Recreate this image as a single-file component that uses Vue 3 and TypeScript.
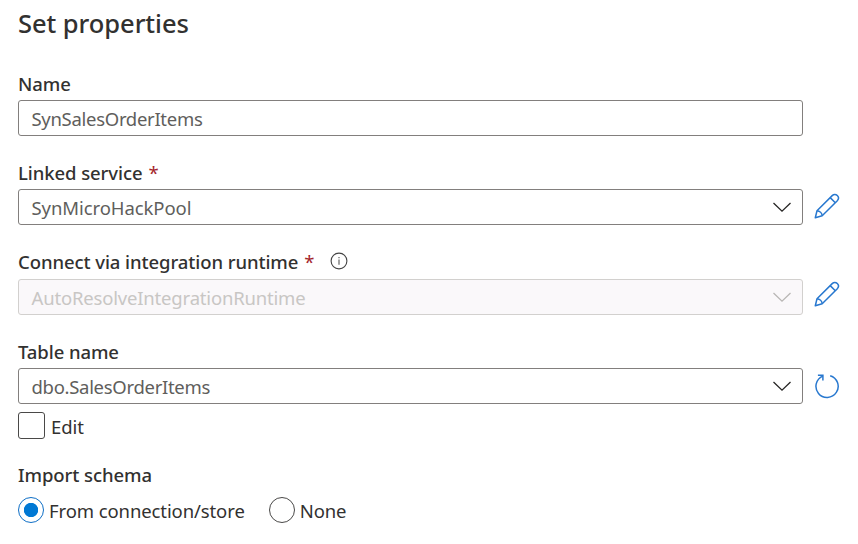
<script setup lang="ts">
import { ref } from 'vue'

interface Field {
  id: string
  label: string
  value: string
  required?: boolean
  info?: boolean
  select?: boolean
  disabled?: boolean
  action?: 'edit' | 'refresh'
}

const fields: Field[] = [
  { id: 'name', label: 'Name', value: 'SynSalesOrderItems' },
  { id: 'linked', label: 'Linked service', value: 'SynMicroHackPool', required: true, select: true, action: 'edit' },
  { id: 'runtime', label: 'Connect via integration runtime', value: 'AutoResolveIntegrationRuntime', required: true, info: true, select: true, disabled: true, action: 'edit' },
  { id: 'table', label: 'Table name', value: 'dbo.SalesOrderItems', select: true, action: 'refresh' },
]
const options = [
  { id: 'connection', label: 'From connection/store' },
  { id: 'none', label: 'None' },
]
const schema = ref('connection')
const editing = ref(false)
</script>

<template>
  <main class="panel">
    <h1 class="title"><span>Set properties</span></h1>

    <section v-for="f in fields" :key="f.id" class="field" :class="f.id">
      <div class="label">
        <span class="label-text">{{ f.label }}</span>
        <span v-if="f.required" class="star">*</span>
        <svg v-if="f.info" class="info" viewBox="0 0 18 18" fill="none">
          <circle cx="9" cy="9" r="7.9" stroke="#444" stroke-width="1.1" />
          <path d="M9 7.4v5.4M9 4.9v1.3" stroke="#555" stroke-width="1.1" />
        </svg>
      </div>
      <div class="row">
        <div class="box" :class="{ disabled: f.disabled }">
          <span class="value">{{ f.value }}</span>
          <svg v-if="f.select" class="chevron" viewBox="0 0 20 12" fill="none">
            <path d="M1.5 2L10 10.2L18.5 2" stroke="currentColor" stroke-width="1.3" />
          </svg>
        </div>
        <button v-if="f.action" class="action" type="button">
          <svg v-if="f.action === 'edit'" viewBox="0 0 26 26" fill="none" stroke="#2878cf" stroke-width="1.5" stroke-linejoin="round">
            <path d="M1.3 24.7L3 17.8L18.2 2.6C19.8 1 21.8 1 23.3 2.5C24.8 4 24.8 6.1 23.3 7.7L8.2 22.8Z" />
            <path d="M3 17.8C5.6 18 8 20.2 8.2 22.8M16.2 4.6L21.3 9.7" />
          </svg>
          <svg v-else viewBox="0 0 26 26" fill="none" stroke="#2878cf" stroke-width="1.5">
            <path d="M16.2 2.7A11.1 11.1 0 1 1 8.8 3.1" />
            <path d="M3.9 2.2H8.9V7.6" />
          </svg>
        </button>
      </div>
    </section>

    <label class="check">
      <input v-model="editing" type="checkbox" />
      <span class="edit-text">Edit</span>
    </label>

    <div class="label schema"><span class="label-text">Import schema</span></div>
    <div class="radios">
      <label v-for="o in options" :key="o.id" class="radio" :class="o.id">
        <input v-model="schema" type="radio" name="schema" :value="o.id" />
        <span>{{ o.label }}</span>
      </label>
    </div>
  </main>
</template>

<style>
body {
  background: #fff;
}
</style>

<style scoped>
.panel {
  box-sizing: border-box;
  height: 544px;
  padding: 3px 18px 0;
  overflow: hidden;
  font-family: "Noto Sans", "Open Sans", sans-serif;
  font-size: 18.5px;
  color: #323130;
}
.title {
  margin: 0 0 24px;
  height: 40px;
  line-height: 40px;
  font-size: 25.5px;
  font-weight: 540;
  letter-spacing: -0.06px;
}
.field {
  height: 89px;
}
.linked {
  height: 90px;
}
.table {
  height: 69px;
}
.label {
  display: flex;
  align-items: center;
  height: 33px;
  box-sizing: border-box;
  padding-bottom: 1px;
  font-weight: 540;
  letter-spacing: -0.08px;
}
.runtime .label {
  padding-bottom: 2px;
}
.star {
  margin-left: 6px;
  color: #a4262c;
  font-weight: 400;
}
.info {
  width: 18px;
  height: 18px;
  margin: -1px 0 0 16px;
}
.row {
  display: flex;
  align-items: center;
  gap: 11px;
}
.box {
  box-sizing: border-box;
  display: flex;
  align-items: center;
  justify-content: space-between;
  width: 785px;
  height: 36px;
  padding: 0 10px 0 12.5px;
  border: 1px solid #827f7d;
  border-radius: 3px;
  color: #605e5c;
  letter-spacing: -0.3px;
}
.linked .value {
  letter-spacing: -0.08px;
}
.runtime .value {
  letter-spacing: -0.18px;
}
.box.disabled {
  border-color: #d2d0ce;
  background: #faf8fa;
  color: #c8c6c4;
}
.chevron {
  width: 20px;
  height: 12px;
  color: #252423;
}
.disabled .chevron {
  color: #b8b6b4;
}
.action {
  display: flex;
  width: 26px;
  height: 26px;
  padding: 0;
  border: 0;
  background: none;
}
.linked .action {
  margin-top: -3px;
}
.runtime .action {
  margin-top: -6px;
}
.action svg {
  width: 26px;
  height: 26px;
}
.check,
.radio {
  display: flex;
  align-items: center;
}
.check {
  height: 27px;
  margin-top: 8px;
  gap: 6px;
}
.edit-text {
  margin-top: 1px;
  letter-spacing: -0.1px;
}
input {
  box-sizing: border-box;
  flex: none;
  margin: 0;
  appearance: none;
  background: #fff;
  border: 1px solid #4a4948;
}
.check input {
  width: 27px;
  height: 27px;
  border-radius: 3px;
}
.schema {
  margin-top: 19px;
}
.radios {
  display: flex;
  gap: 24px;
  margin-top: 6px;
}
.radio {
  height: 26px;
  gap: 5px;
  letter-spacing: -0.1px;
}
.radio input {
  width: 26px;
  height: 26px;
  border-radius: 50%;
}
.radio input:checked {
  border-color: #0f6fc6;
  background: radial-gradient(circle, #0078d4 6.8px, #fff 7.5px);
}
</style>
